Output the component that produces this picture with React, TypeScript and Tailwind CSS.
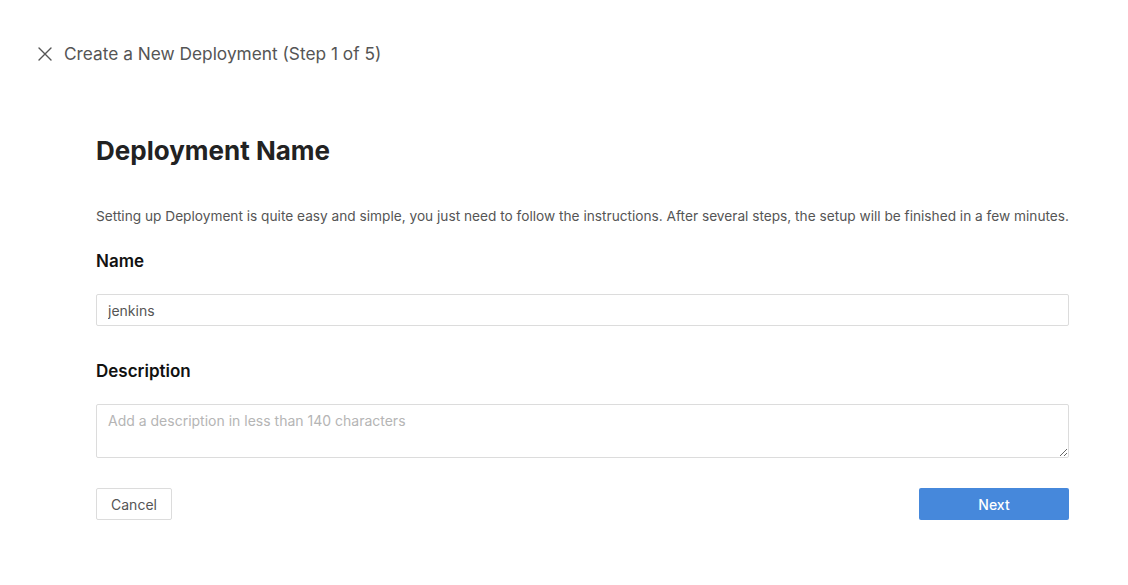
import React from 'react';

export default function App() {
  return (
    <div className="min-h-[585px] w-[1128px] bg-white text-[#333] font-['Inter','Noto_Sans',sans-serif]">
      <div className="flex items-center h-[106px] pt-[2px] pl-[38px]">
        <button className="flex items-center justify-center w-[14px] h-[14px] text-[#555]">
          <svg width="14" height="14" viewBox="0 0 14 14" fill="none" stroke="currentColor" strokeWidth="1.4" strokeLinecap="round">
            <path d="M1 1L13 13M13 1L1 13" />
          </svg>
        </button>
        <span className="ml-[12px] text-[17.3px] text-[#555]">Create a New Deployment (Step 1 of 5)</span>
      </div>

      <div className="pl-[96px] pr-[59px]">
        <h1 className="text-[26px] font-bold text-[#222] leading-[32px] mt-[29px]">Deployment Name</h1>
        <p className="mt-[39px] text-[13.68px] text-[#555] leading-[20px]">
          Setting up Deployment is quite easy and simple, you just need to follow the instructions. After several steps, the setup will be finished in a few minutes.
        </p>

        <label className="block mt-[24px] text-[17px] font-semibold text-[#111] leading-[22px]">Name</label>
        <input
          defaultValue="jenkins"
          className="block mt-[22px] w-full h-[32px] border border-[#dcdcdc] rounded-[2px] px-[11px] text-[14px] text-[#555] outline-none"
        />

        <label className="block mt-[34px] text-[17px] font-semibold text-[#111] leading-[22px]">Description</label>
        <textarea
          placeholder="Add a description in less than 140 characters"
          className="block mt-[22px] w-full h-[54px] border border-[#dcdcdc] rounded-[2px] px-[11px] py-[5px] text-[14px] text-[#555] placeholder:text-[#b5b5b5] outline-none"
        />

        <div className="flex justify-between mt-[30px]">
          <button className="w-[76px] h-[32px] border border-[#dcdcdc] rounded-[2px] text-[14px] text-[#555] bg-white">Cancel</button>
          <button className="w-[150px] h-[32px] rounded-[2px] text-[14px] font-medium text-white bg-[#4688DB]">Next</button>
        </div>
      </div>
    </div>
  );
}
